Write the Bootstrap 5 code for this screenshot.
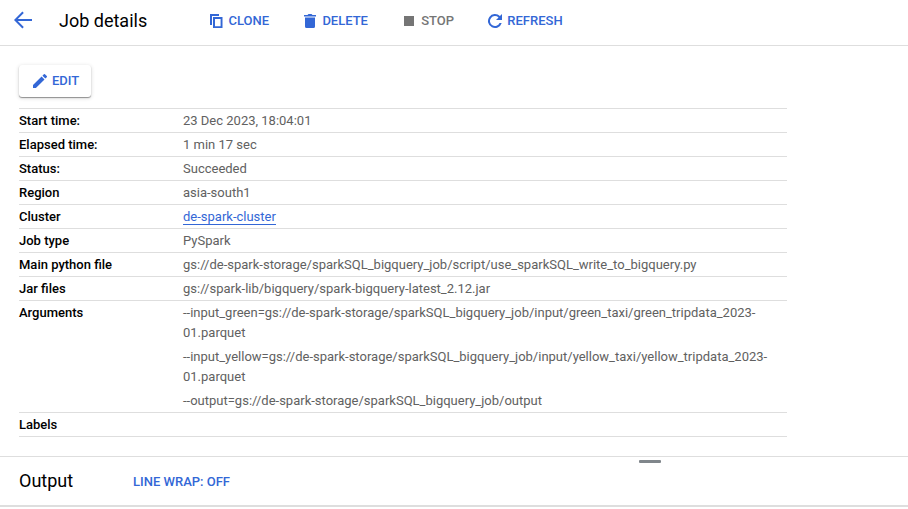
<!DOCTYPE html>
<html lang="en">
<head>
<meta charset="utf-8">
<title>Job details</title>
<link href="https://cdn.jsdelivr.net/npm/bootstrap@5.3.0/dist/css/bootstrap.min.css" rel="stylesheet">
<style>
body{font-family:Roboto,"Liberation Sans",sans-serif;font-size:13px;line-height:20px;color:#000;height:509px;overflow:hidden}
.topbar{height:46px;border-bottom:1px solid #dedede;padding:0 12px 3px 14px}
.page-title{font-size:18px;line-height:24px;font-weight:400;margin:0}
.topbar .page-title{width:148px;margin-left:27px}
.tool{font-size:13px;line-height:20px;font-weight:500;color:#3367d6;padding:0;border:0;border-radius:0;gap:3.500px;white-space:nowrap}
.edit.tool{gap:3px}
.tool.off{color:#757575}
.tools{gap:31.750px}
svg{display:block;fill:currentColor;flex:none}
.back{margin-top:-2px}
.blue{color:#3367d6}
.content-area{height:410px;padding:19px 0 0 19px}
.edit{width:72px;height:32px;border-radius:3px;box-shadow:0 1px 1px rgba(0,0,0,.38),0 1px 4px rgba(0,0,0,.16);margin-bottom:11px;padding-left:12px}
.details{width:768px;border-bottom:1px solid #dedede;margin:0}
.detail{border-top:1px solid #dedede;padding:2px 0 1px}
.detail dt{width:164px;font-weight:500;flex:none}
.detail dd{margin:0;color:#616161}
.detail dd div+div{margin-top:4px}
.cluster-link{color:#3367d6;text-decoration:none;border-bottom:1px solid #3367d6}
.output{height:51px;border-top:1px solid #dedede;border-bottom:2px solid #dedede;padding:0 0 0 19px}
.output .page-title{width:114px}
.output .tool{padding-top:2px}
.grip{left:639px;top:3px;width:22px;height:3px;background:#80868b;border-radius:1px}
</style>
<script src="https://cdn.jsdelivr.net/npm/bootstrap@5.3.0/dist/js/bootstrap.bundle.min.js"></script>
</head>
<body class="bg-white">
<header class="topbar d-flex align-items-center">
  <a href="#" class="blue back" aria-label="Back"><svg width="18" height="18" viewBox="3 3 18 18"><path d="M21 11H6.800l6-6L11.400 3.600 3 12l8.400 8.400 1.400-1.400-6-6H21z"/></svg></a>
  <h1 class="page-title">Job details</h1>
  <div class="tools d-flex align-items-center">
    <button class="btn tool d-flex align-items-center"><svg width="18" height="18" viewBox="-3 -2 18 18"><path d="M0 0h9v2H2v9H0zM3 3h9.500v11H3zm2 2v7.200h5.600V5z"/></svg><span>CLONE</span></button>
    <button class="btn tool d-flex align-items-center"><svg width="18" height="18" viewBox="-3 -2 18 18"><path d="M0 1h3.500L4.500 0h3l1 1H12v1.500H0zM1 3.500h10V12.500Q11 14 9.500 14h-7Q1 14 1 12.500z"/></svg><span>DELETE</span></button>
    <button class="btn tool off d-flex align-items-center"><svg width="18" height="18" viewBox="-4 -4 18 18"><path d="M0 0h10v10H0z"/></svg><span>STOP</span></button>
    <button class="btn tool d-flex align-items-center"><svg width="18" height="18" viewBox="-2 -2 18 18"><path d="M11.950 2.050A7 7 0 1 0 13.700 9h-2.130A5 5 0 1 1 10.530 3.470L8 6h6V0z"/></svg><span>REFRESH</span></button>
  </div>
</header>
<main class="content-area">
  <button class="btn tool edit d-flex align-items-center"><svg width="18" height="18" viewBox="-2 -2 18 18"><path transform="scale(.7778) translate(-3 -3)" d="M3 17.250V21h3.750L17.810 9.940l-3.750-3.750zM20.710 7.040a1 1 0 0 0 0-1.410l-2.340-2.340a1 1 0 0 0-1.410 0l-1.830 1.830 3.750 3.750z"/></svg><span>EDIT</span></button>
  <dl class="details">
    <div class="detail d-flex"><dt>Start time:</dt><dd>23 Dec 2023, 18:04:01</dd></div>
    <div class="detail d-flex"><dt>Elapsed time:</dt><dd>1 min 17 sec</dd></div>
    <div class="detail d-flex"><dt>Status:</dt><dd>Succeeded</dd></div>
    <div class="detail d-flex"><dt>Region</dt><dd>asia-south1</dd></div>
    <div class="detail d-flex"><dt>Cluster</dt><dd><a href="#" class="cluster-link">de-spark-cluster</a></dd></div>
    <div class="detail d-flex"><dt>Job type</dt><dd>PySpark</dd></div>
    <div class="detail d-flex"><dt>Main python file</dt><dd>gs://de-spark-storage/sparkSQL_bigquery_job/script/use_sparkSQL_write_to_bigquery.py</dd></div>
    <div class="detail d-flex"><dt>Jar files</dt><dd>gs://spark-lib/bigquery/spark-bigquery-latest_2.12.jar</dd></div>
    <div class="detail d-flex"><dt>Arguments</dt><dd>
      <div>--input_green=gs://de-spark-storage/sparkSQL_bigquery_job/input/green_taxi/green_tripdata_2023-<br>01.parquet</div>
      <div>--input_yellow=gs://de-spark-storage/sparkSQL_bigquery_job/input/yellow_taxi/yellow_tripdata_2023-<br>01.parquet</div>
      <div>--output=gs://de-spark-storage/sparkSQL_bigquery_job/output</div></dd></div>
    <div class="detail d-flex"><dt>Labels</dt><dd></dd></div>
  </dl>
</main>
<section class="output position-relative d-flex align-items-center">
  <div class="grip position-absolute"></div>
  <h2 class="page-title">Output</h2>
  <button class="btn tool">LINE WRAP: OFF</button>
</section>
</body>
</html>
